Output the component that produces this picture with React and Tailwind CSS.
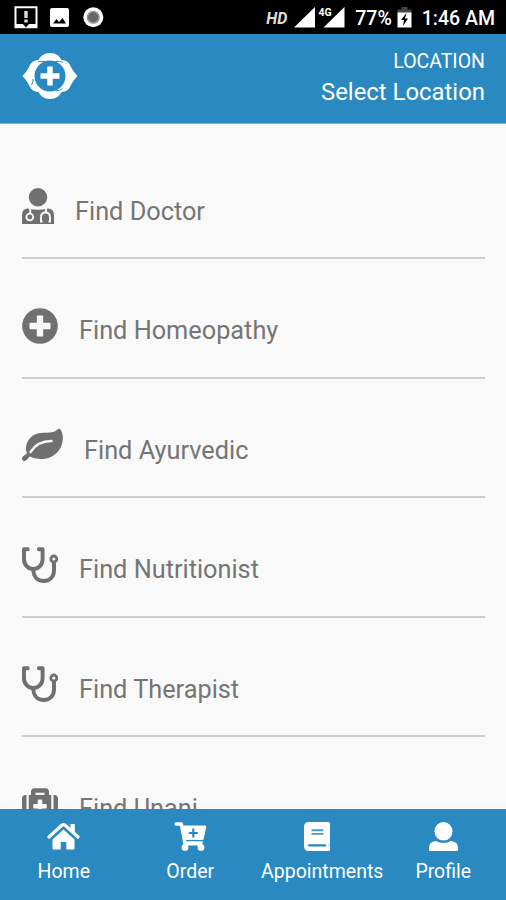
import React from "react";
import { FaMedkit } from "react-icons/fa";

function DoctorIcon({ className }) {
  return (
    <svg className={className} viewBox="0 0 32 36">
      <circle cx="16" cy="9.200" r="9.200" fill="currentColor" />
      <path d="M0 36V27Q0 20.500 6 20.500Q16 23 26 20.500Q32 20.500 32 27V36Z" fill="currentColor" />
      <g fill="none" stroke="#f9f9f9" strokeWidth="1.900">
        <path d="M8.200 20v5.500M24 20v4" />
        <circle cx="7.800" cy="29" r="3.400" />
        <path d="M20.500 33.500H19V29.500Q19 24.500 23.500 24.500Q28 24.500 28 29.500V33.500H26.500" />
      </g>
    </svg>
  );
}

function PlusCircleIcon({ className }) {
  return (
    <svg className={className} viewBox="0 0 36 36">
      <circle cx="18" cy="18" r="17.800" fill="currentColor" />
      <path
        d="M15.800 7.500h4.400q1 0 1 1v6.300h6.300q1 0 1 1v4.400q0 1-1 1h-6.300v6.300q0 1-1 1h-4.400q-1 0-1-1v-6.300H8.500q-1 0-1-1v-4.400q0-1 1-1h6.300V8.500q0-1 1-1z"
        fill="#f9f9f9"
      />
    </svg>
  );
}

function LeafIcon({ className }) {
  return (
    <svg className={className} viewBox="0 0 41 33">
      <path
        d="M37.500 .3C39.500 1 41 6 40.800 10.500C40.300 22 31 30.500 19.500 30.500C14.500 30.500 10.500 29.500 8 28C6 29 5 32.500 2.300 32.500C.5 32.500-.5 30.500.3 28.800C1 27.200 4 26.300 5 24.800C3.500 22 3.500 18 5 14.500C8 7.500 13.500 4.500 21 4.300C27 4.200 31.500 4.300 34.500 1.800C35.600.8 36.300-.1 37.500.3Z"
        fill="currentColor"
      />
      <path d="M8.500 23.500Q15.500 12.500 29.500 12.500" fill="none" stroke="#f9f9f9" strokeWidth="2.400" strokeLinecap="round" />
    </svg>
  );
}

function StethoscopeIcon({ className }) {
  return (
    <svg className={className} viewBox="0 0 36 36" fill="none" stroke="currentColor" strokeWidth="3.900">
      <path
        d="M5.800 2.300H2V12.500C2 18 6.500 22 11.300 22S20.600 18 20.600 12.500V2.300H16.800"
        strokeLinecap="round"
        strokeLinejoin="round"
      />
      <path d="M11.300 22.500C11.300 29.500 15.500 34 21.800 34S32 29.500 32 23.500V15.500" />
      <circle cx="31.800" cy="12" r="3" strokeWidth="2.800" />
    </svg>
  );
}

function HomeIcon({ className }) {
  return (
    <svg className={className} viewBox="0 0 33 29">
      <path
        d="M2 15L14.800 3.300Q16.500 2 18.200 3.300L31 15"
        fill="none"
        stroke="currentColor"
        strokeWidth="3.200"
        strokeLinecap="round"
        strokeLinejoin="round"
      />
      <path d="M23.500 2h4.300v9l-4.300-3.500z" fill="currentColor" />
      <path d="M16.500 7.500L27.500 17.500V26.500Q27.500 27.500 26.500 27.500H19.300V20H13.700V27.500H6.500Q5.500 27.500 5.500 26.500V17.500Z" fill="currentColor" />
    </svg>
  );
}

function CartIcon({ className }) {
  return (
    <svg className={className} viewBox="0 0 33 29">
      <path d="M2.200 2H7.300L11 21.500" fill="none" stroke="currentColor" strokeWidth="3.400" strokeLinecap="round" strokeLinejoin="round" />
      <path d="M7 3.500H31Q32.500 3.500 32.200 5L29.800 16.500Q29.500 18 28 18H9.800Z" fill="currentColor" />
      <path d="M10 19.200H29L28 23.500H10.500Z" fill="currentColor" />
      <circle cx="11" cy="25.500" r="3.400" fill="currentColor" />
      <circle cx="27" cy="25.500" r="3.400" fill="currentColor" />
      <path d="M19.300 6.500v9M14.800 11h9" stroke="#2989c0" strokeWidth="2.200" />
    </svg>
  );
}

function BookIcon({ className }) {
  return (
    <svg className={className} viewBox="0 0 26 29">
      <path d="M5 0H24.500Q26 0 26 1.500V27.500Q26 29 24.500 29H5Q0 29 0 24V5Q0 0 5 0Z" fill="currentColor" />
      <path d="M7.500 8.300h12M7.500 11.900h12" stroke="#2989c0" strokeWidth="1.900" opacity=".85" />
      <path d="M5.200 23.400H21" stroke="#2989c0" strokeWidth="2.400" strokeLinecap="round" />
      <path d="M24.800 21.500v4" stroke="#2989c0" strokeWidth=".7" opacity=".4" />
    </svg>
  );
}

function ProfileIcon({ className }) {
  return (
    <svg className={className} viewBox="0 0 29 29">
      <ellipse cx="14.500" cy="9.300" rx="9" ry="9.300" fill="currentColor" />
      <path d="M1.500 29Q0 29 0 27.500V26Q0 19.500 7 19Q14.500 22.800 22 19Q29 19.500 29 26V27.500Q29 29 27.500 29Z" fill="currentColor" />
    </svg>
  );
}

const services = [
  { label: "Find Doctor", Icon: DoctorIcon, size: "w-8" },
  { label: "Find Homeopathy", Icon: PlusCircleIcon, size: "w-9" },
  { label: "Find Ayurvedic", Icon: LeafIcon, size: "w-[41px]" },
  { label: "Find Nutritionist", Icon: StethoscopeIcon, size: "w-9" },
  { label: "Find Therapist", Icon: StethoscopeIcon, size: "w-9" },
  { label: "Find Unani", Icon: FaMedkit, size: "w-9" },
];

const tabs = [
  { label: "Home", Icon: HomeIcon, size: "w-[33px]", shift: "" },
  { label: "Order", Icon: CartIcon, size: "w-[33px]", shift: "" },
  { label: "Appointments", Icon: BookIcon, size: "w-[26px]", shift: "pl-[11px]" },
  { label: "Profile", Icon: ProfileIcon, size: "w-[29px]", shift: "" },
];

function StatusBar() {
  return (
    <div className="flex h-[34px] shrink-0 items-center bg-black pl-[14px] pr-[11px] text-white">
      <svg className="h-[34px] w-[100px]" viewBox="14 0 100 34">
        <path d="M15.500 7.200h21v20h-21z" fill="none" stroke="#fff" strokeWidth="2" />
        <path d="M16 24h20v4H16z" fill="#fff" />
        <path d="M22 23h8l-4 4.500z" fill="#000" />
        <path d="M24.300 11h3.400v7h-3.400zM24.300 19.500h3.400v3h-3.400z" fill="#ddd" />
        <rect x="50" y="8" width="19" height="19" rx="2" fill="#fff" />
        <path d="M53 23.500l3.500-4.500 2.500 3 3.500-4 3.500 5.500z" fill="#000" />
        <circle cx="93.300" cy="17.300" r="10" fill="#fff" />
        <circle cx="93.300" cy="17.300" r="5.800" fill="#666" stroke="#999" strokeWidth="1.500" />
      </svg>
      <span className="ml-auto pt-[3px] text-[16px] font-bold italic leading-none text-[#ddd]">HD</span>
      <svg className="ml-[7px] h-[34px] w-[52px]" viewBox="294 0 52 34">
        <path d="M294 27.500L315 7v20.500zM323.500 27.500L344.500 7v20.500z" fill="#fff" />
        <text x="318.500" y="16" fontSize="10.500" fontWeight="700" fill="#fff" stroke="#000" strokeWidth="2" paintOrder="stroke">4G</text>
      </svg>
      <span className="ml-[9px] pt-[3px] text-[19.500px] font-medium leading-none">77%</span>
      <svg className="ml-[5px] h-[34px] w-[15px]" viewBox="397 0 15 34">
        <path d="M401.500 7h6v2.500h4v4h-14v-4h4z" fill="#444" />
        <path d="M397.500 12.500h14v15h-14z" fill="#fff" />
        <path d="M406.500 13l-5.500 7h3l-1 6 5-7.500h-3z" fill="#000" />
      </svg>
      <span className="ml-[10px] pt-[3px] text-[19.500px] font-medium leading-none">1:46 AM</span>
    </div>
  );
}

function Logo() {
  return (
    <svg className="h-[48px] w-[56px]" viewBox="0 0 56 48">
      <path
        d="M28 1C34 1 37.500 4 39.500 8C44 8.500 46.500 10 48 13C50 17.500 52 20 55.500 24C52 28 50 30.500 48 35C46.500 38 44 39.500 39.500 40C37.500 44 34 47 28 47C22 47 18.500 44 16.500 40C12 39.500 9.500 38 8 35C6 30.500 4 28 .5 24C4 20 6 17.500 8 13C9.500 10 12 8.500 16.500 8C18.500 4 22 1 28 1Z"
        fill="#fff"
      />
      <circle cx="28" cy="24" r="15.500" fill="#2989c0" />
      <path
        d="M16 9.800Q20 9.200 23.500 9.500M33 9.500Q38 8.500 41 10.500M9.500 33Q11.500 30 11 27M34 39Q38 38.800 40.500 36.500"
        fill="none"
        stroke="#2989c0"
        strokeWidth="1"
      />
      <path d="M25.300 14.500h5.400v6.800h6.800v5.400h-6.800v6.800h-5.400v-6.800h-6.800v-5.400h6.800z" fill="#fff" />
    </svg>
  );
}

export default function App() {
  return (
    <div className="flex h-[900px] w-[506px] flex-col overflow-hidden bg-[#f9f9f9] font-['Roboto',sans-serif]">
      <StatusBar />
      <header className="flex h-[90px] shrink-0 items-start justify-between border-b border-[#75b3d7] bg-[#2989c0] pl-[22px] pr-[21px] text-white">
        <div className="pt-[18px]">
          <Logo />
        </div>
        <div className="pt-[15px] text-right">
          <div className="text-[19.500px] leading-[26px]">LOCATION</div>
          <div className="mt-[3px] text-[23.900px] leading-[28px]">Select Location</div>
        </div>
      </header>
      <main className="min-h-0 flex-1 overflow-hidden px-[21.500px] pt-[15.500px]">
        {services.map(({ label, Icon, size }) => (
          <div key={label} className="flex h-[119.500px] items-start border-b-2 border-[#cecece] text-[#707070]">
            <Icon className={`mt-[48.500px] h-9 shrink-0 ${size}`} />
            <span className="ml-[21.500px] mt-[56.400px] text-[25.300px] leading-[32px] text-[#757575]">{label}</span>
          </div>
        ))}
      </main>
      <nav className="grid h-[91px] shrink-0 grid-cols-4 bg-[#2989c0] text-white">
        {tabs.map(({ label, Icon, size, shift }) => (
          <div key={label} className="flex flex-col items-center pl-px pt-[13px]">
            <Icon className={`h-[29px] shrink-0 ${size}`} />
            <span className={`mt-[9px] whitespace-nowrap text-[19.500px] leading-6 ${shift}`}>{label}</span>
          </div>
        ))}
      </nav>
    </div>
  );
}
